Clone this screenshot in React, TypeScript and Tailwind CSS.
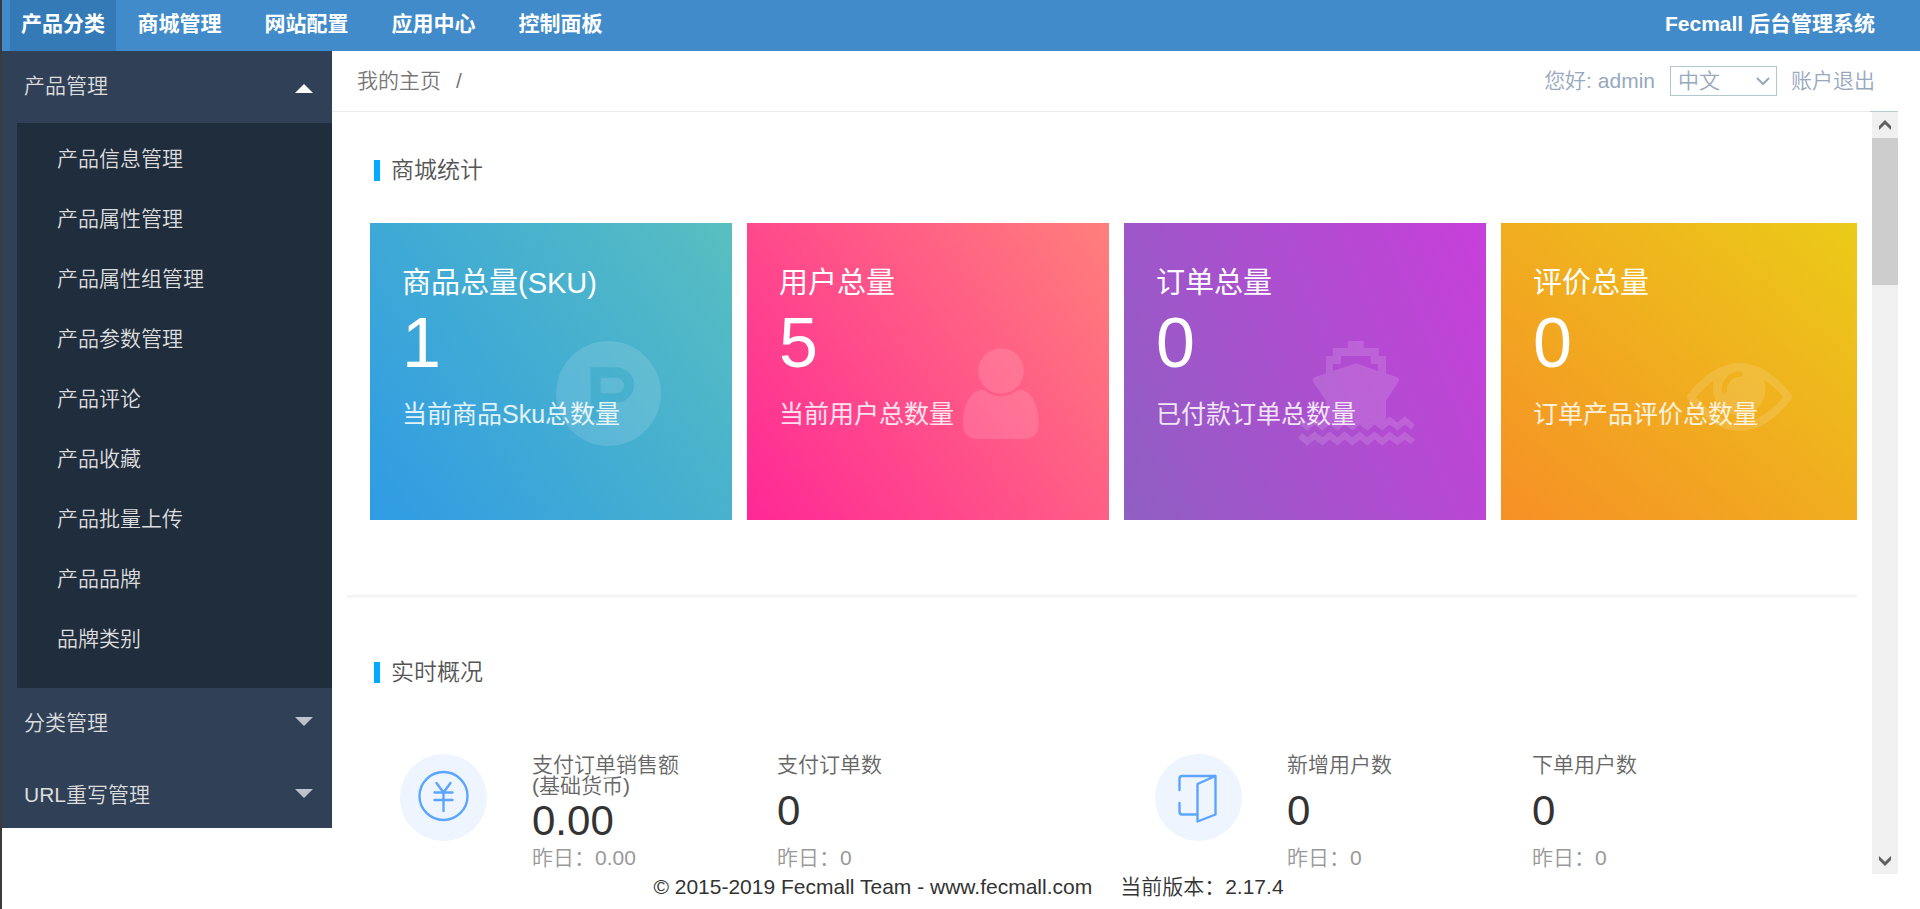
import clsx from "clsx";
import { ReactNode, useState } from "react";

const topMenu = ["产品分类", "商城管理", "网站配置", "应用中心", "控制面板"];

const sideMenu = [
  {
    title: "产品管理",
    items: [
      "产品信息管理",
      "产品属性管理",
      "产品属性组管理",
      "产品参数管理",
      "产品评论",
      "产品收藏",
      "产品批量上传",
      "产品品牌",
      "品牌类别",
    ],
  },
  { title: "分类管理", items: [] },
  { title: "URL重写管理", items: [] },
];

function ProductMark() {
  return (
    <path
      fillRule="evenodd"
      d="M60.5 8a52.5 52.5 0 1 0 0 105a52.5 52.5 0 1 0 0-105ZM42.7 34.3H68.5a17.7 17.7 0 0 1 0 35.4H52.7V87H42.7ZM52.7 44.7V60.3H68.2a7.8 7.8 0 0 0 0-15.6Z"
    />
  );
}

function PersonMark() {
  return (
    <>
      <circle cx="76" cy="38" r="22.8" />
      <path d="M56.7 57C60 57 61.5 58.2 63.5 60A27 27 0 0 0 88.5 60C90.5 58.2 92 57 95 57C107 57 113.7 74 113.7 91C113.7 100 108 106 100 106H52C44 106 38 100 38 91C38 74 45 57 56.7 57Z" />
    </>
  );
}

function BoatMark() {
  return (
    <>
      <path
        fillRule="evenodd"
        d="M46 8H61.7V15H76.7V23H84V40.5L95.5 44.3Q98 45.5 96.6 48.5L84 68V86L76.5 94L69 86L61.5 94L54 86L46.5 94L39 86L31.5 94L24 86V68L11 48.5Q9.5 45.5 12.5 44.3L24 40.5V23H31V15H46ZM39 23V31H31V38L54 30.3L76 38V31H68.7V23Z"
      />
      <path
        fill="none"
        stroke="currentColor"
        strokeWidth="6.4"
        d="M-2 87.5L5.3 93.5L12.7 87.5L20.3 93.5L27.7 87.5L35.3 93.5L42.7 87.5L50.3 93.5L57.7 87.5L65.3 93.5L72.7 87.5L80.3 93.5L87.7 87.5L95.3 93.5L102.7 87.5L111 94M-2 102.5L5.3 108.5L12.7 102.5L20.3 108.5L27.7 102.5L35.3 108.5L42.7 102.5L50.3 108.5L57.7 102.5L65.3 108.5L72.7 102.5L80.3 108.5L87.7 102.5L95.3 108.5L102.7 102.5L111 109"
      />
    </>
  );
}

function EyeMark() {
  return (
    <>
      <mask id="glint">
        <rect width="120" height="120" fill="#fff" />
        <path
          d="M45.3 57C45.3 48 52 41.3 60.7 41.3"
          fill="none"
          stroke="#000"
          strokeWidth="5.4"
          strokeLinecap="round"
        />
      </mask>
      <g mask="url(#glint)">
        <path
          d="M12 64C28 44 43 34.3 60.5 34.3S93 44 109.3 64C93 84 78 94 60.5 94S28 84 12 64Z"
          fill="none"
          stroke="currentColor"
          strokeWidth="8"
          strokeLinejoin="round"
        />
        <circle cx="60.3" cy="56" r="26.3" />
      </g>
    </>
  );
}

const cards = [
  {
    title: "商品总量(SKU)",
    value: "1",
    note: "当前商品Sku总数量",
    bg: "bg-[linear-gradient(54deg,#2f9be4,#58bfc0)]",
    mark: <ProductMark />,
  },
  {
    title: "用户总量",
    value: "5",
    note: "当前用户总数量",
    bg: "bg-[linear-gradient(54deg,#ff2896,#ff7f7b)]",
    mark: <PersonMark />,
  },
  {
    title: "订单总量",
    value: "0",
    note: "已付款订单总数量",
    bg: "bg-[linear-gradient(68deg,#8f5fc3,#c83fda)]",
    mark: <BoatMark />,
  },
  {
    title: "评价总量",
    value: "0",
    note: "订单产品评价总数量",
    bg: "bg-[linear-gradient(40deg,#f69026,#ebcb18)]",
    mark: <EyeMark />,
  },
];

function SectionTitle({ children }: { children: ReactNode }) {
  return (
    <h2 className="ml-[42px] flex items-center gap-[11px] text-[23px] leading-7 text-[#555]">
      <span className="h-[21px] w-1.5 bg-[#00aaff]" />
      {children}
    </h2>
  );
}

function Stat({ label, value, last }: { label: ReactNode; value: string; last: string }) {
  return (
    <div className="flex w-[245px] flex-col justify-between">
      <p className="leading-[21px] text-[#666]">{label}</p>
      <p className="text-[42px] leading-[50px] text-[#333]">{value}</p>
      <p className="leading-6 text-[#999]">昨日：{last}</p>
    </div>
  );
}

function StatIcon({ children }: { children: ReactNode }) {
  return (
    <svg
      viewBox="0 0 87 87"
      className="mr-[45px] size-[87px] shrink-0 rounded-full bg-[#eef5ff]"
      fill="none"
      stroke="#5ca5ff"
      strokeWidth="2.4"
      strokeLinecap="round"
      strokeLinejoin="round"
    >
      {children}
    </svg>
  );
}

function Sidebar() {
  const [open, setOpen] = useState("产品管理");

  return (
    <aside className="w-[330px] shrink-0 self-start bg-[#304056] text-[#ddd]">
      {sideMenu.map(({ title, items }) => {
        const isOpen = open === title && items.length > 0;
        return (
          <div key={title} className={clsx(!isOpen && "pb-1 last:pb-0")}>
            <button
              className="flex w-full items-center justify-between pt-[21px] pr-[19px] pb-[19px] pl-[22px] leading-7"
              onClick={() => setOpen(isOpen ? "" : title)}
            >
              {title}
              <svg
                viewBox="0 0 18 9"
                className={clsx("h-[9px] w-[18px]", isOpen ? "mt-1 text-white" : "mb-1 text-[#bfc4cb]")}
                fill="currentColor"
              >
                {isOpen ? <path d="M9 0L18 9H0Z" /> : <path d="M0 0H18L9 9Z" />}
              </svg>
            </button>
            {isOpen && (
              <ul className="mt-1 ml-[15px] bg-[#202d3d] pt-1.5 pb-[19px]">
                {items.map((item) => (
                  <li key={item}>
                    <a href="#" className="block pl-10 leading-[60px]">
                      {item}
                    </a>
                  </li>
                ))}
              </ul>
            )}
          </div>
        );
      })}
    </aside>
  );
}

function ScrollBar() {
  return (
    <div className="mr-[22px] w-7 shrink-0 border-t border-[#b4cdd3] pl-0.5">
      <div className="flex h-full flex-col bg-[#f0f0f0]">
        <button aria-label="向上" className="flex h-[26px] items-center justify-center">
          <svg viewBox="0 0 12 10" className="h-2.5 w-3" fill="#606060">
            <path d="M6 0L12 6V10L6 4.2L0 10V6Z" />
          </svg>
        </button>
        <div className="h-[147px] bg-[#cdcdcd]" />
        <button aria-label="向下" className="mt-auto flex h-[26px] items-center justify-center">
          <svg viewBox="0 0 12 10" className="h-2.5 w-3" fill="#606060">
            <path d="M6 10L12 4V0L6 5.8L0 0V4Z" />
          </svg>
        </button>
      </div>
    </div>
  );
}

function App() {
  return (
    <div className="flex h-screen flex-col overflow-hidden border-l-2 border-[#3a3b3d] bg-white font-['Liberation_Sans','Noto_Sans_CJK_SC',sans-serif] text-[21px] font-[350]">
      <header className="flex h-[51px] shrink-0 items-center justify-between bg-[#428bca] pr-[45px] pl-2 font-bold text-white">
        <nav className="flex">
          {topMenu.map((name, i) => (
            <a
              key={name}
              href="#"
              className={clsx(
                "pb-[3px] text-center leading-[48px]",
                i === 0 ? "w-[106px] bg-[#337ab7]" : "w-[127px]"
              )}
            >
              {name}
            </a>
          ))}
        </nav>
        <h1 className="pb-[3px]">Fecmall 后台管理系统</h1>
      </header>

      <div className="flex min-h-0 flex-1">
        <Sidebar />
        <div className="flex min-w-0 flex-1 flex-col">
          <div className="flex h-[60px] shrink-0 items-center justify-between pr-[45px] pl-[25px]">
            <nav className="flex gap-[15px] text-[#777]">
              <a href="#">我的主页</a>
              <span>/</span>
            </nav>
            <div className="flex items-center text-[#97a8be]">
              <span>您好: admin</span>
              <div className="relative mr-3.5 ml-[15px]">
                <select
                  aria-label="语言"
                  className="block h-[30px] w-[107px] appearance-none border border-[#b0c9d0] bg-white pl-[7px] leading-7"
                >
                  <option>中文</option>
                  <option>English</option>
                </select>
                <svg
                  viewBox="0 0 14 9"
                  className="pointer-events-none absolute top-[11px] right-[7px] h-[9px] w-3.5"
                  fill="none"
                  stroke="currentColor"
                  strokeWidth="2"
                >
                  <path d="M1 1L7 7L13 1" />
                </svg>
              </div>
              <a href="#">账户退出</a>
            </div>
          </div>

          <div className="flex min-h-0 flex-1">
            <main className="min-w-0 flex-1 overflow-hidden border-t border-[#ebebeb] pt-11">
              <SectionTitle>商城统计</SectionTitle>
              <div className="mt-[39px] mr-[13px] ml-[38px] grid grid-cols-[362fr_362fr_362fr_356fr] gap-[15px]">
                {cards.map(({ title, value, note, bg, mark }) => (
                  <div
                    key={title}
                    className={clsx("relative h-[297px] px-8 pt-10 font-normal text-white", bg)}
                  >
                    <svg
                      viewBox="0 0 120 120"
                      className="absolute top-[110px] left-[178px] size-[120px] overflow-visible opacity-[0.13]"
                      fill="currentColor"
                    >
                      {mark}
                    </svg>
                    <h3 className="text-[29px] leading-10">{title}</h3>
                    <p className="text-[70px] leading-[80px]">{value}</p>
                    <p className="relative mt-[15px] text-[25px] leading-8 text-white/85">{note}</p>
                  </div>
                ))}
              </div>

              <div className="mt-[75px] mr-[13px] ml-[15px] h-1 bg-linear-to-b from-[#f0f0f0] to-white" />

              <div className="mt-[59px]">
                <SectionTitle>实时概况</SectionTitle>
                <div className="mt-[68px] mr-[13px] ml-[15px] grid grid-cols-2">
                  <div className="flex pl-[53px]">
                    <StatIcon>
                      <circle cx="43.5" cy="42" r="24" />
                      <path d="M36.5 29L43.5 38.5L50.5 29M34.5 38.5H52.5M34.5 46H52.5M43.5 38.5V57" />
                    </StatIcon>
                    <Stat
                      label={
                        <>
                          支付订单销售额
                          <br />
                          (基础货币)
                        </>
                      }
                      value="0.00"
                      last="0.00"
                    />
                    <Stat label="支付订单数" value="0" last="0" />
                  </div>
                  <div className="flex pl-[53px]">
                    <StatIcon>
                      <path d="M24.5 36V25Q24.5 22 27 22H60.5V60.5L42.5 67.5V30L60.5 22M24.5 49V57.5Q24.5 60.5 27 60.5H42" />
                    </StatIcon>
                    <Stat label="新增用户数" value="0" last="0" />
                    <Stat label="下单用户数" value="0" last="0" />
                  </div>
                </div>
              </div>
            </main>
            <ScrollBar />
          </div>
        </div>
      </div>

      <footer className="flex h-[35px] shrink-0 justify-center gap-7 pl-[15px] leading-[26px] text-[#333]">
        <span>© 2015-2019 Fecmall Team - www.fecmall.com</span>
        <span>当前版本：2.17.4</span>
      </footer>
    </div>
  );
}

export default App;
